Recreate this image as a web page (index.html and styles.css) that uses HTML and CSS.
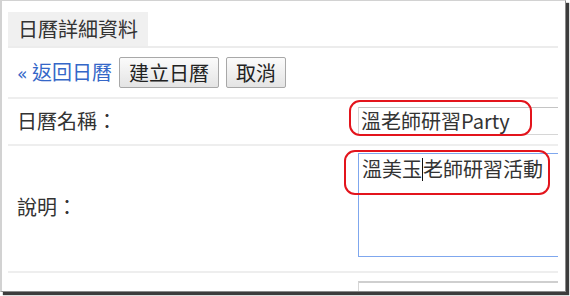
FILE: index.html
```html
<!DOCTYPE html>
<html lang="zh-Hant">
<head>
<meta charset="utf-8">
<title>日曆詳細資料</title>
<link rel="stylesheet" href="styles.css">
</head>
<body>
<div class="frame">
  <div class="content">
    <div class="tabbar"><div class="tab">日曆詳細資料</div></div>
    <div class="toolbar">
      <a class="back" href="#"><span class="raquo">«</span> 返回日曆</a>
      <button class="btn">建立日曆</button>
      <button class="btn">取消</button>
    </div>
    <div class="row row-name">
      <div class="label">日曆名稱：</div>
      <div class="field"><div class="input">溫老師研習Party</div></div>
    </div>
    <div class="row row-desc">
      <div class="label">說明：</div>
      <div class="field"><div class="textarea">溫美玉<span class="caret"></span>老師研習活動</div></div>
    </div>
    <div class="row row-next">
      <div class="label"></div>
      <div class="field"><div class="input input-next"></div></div>
    </div>
  </div>
</div>
<div class="mark mark-name"></div>
<div class="mark mark-desc"></div>
</body>
</html>
```
FILE: styles.css
```css
html, body {
  margin: 0;
  padding: 0;
  background: #ffffff;
}
body {
  position: relative;
  width: 570px;
  height: 296px;
  overflow: hidden;
  font-family: "Noto Sans CJK TC", "Microsoft JhengHei", sans-serif;
  color: #333333;
}
.frame {
  box-sizing: border-box;
  width: 566px;
  height: 292px;
  border-top: 1px solid #d2d2d2;
  border-left: 2px solid #d2d2d2;
  border-right: 1px solid #8a8a8a;
  border-bottom: 1px solid #8a8a8a;
  box-shadow: 3px 3px 1px #3c3c3c;
  background: #ffffff;
  padding: 11px 0 0 6px;
}
.content {
  width: 550px;
  height: 279px;
  overflow: hidden;
}
.tabbar {
  border-bottom: 2px solid #ececec;
  height: 34px;
}
.tab {
  display: inline-block;
  box-sizing: border-box;
  width: 140px;
  height: 34px;
  background: #f0f0f0;
  padding-left: 10px;
  font-size: 20px;
  line-height: 34px;
  color: #333333;
}
.toolbar {
  display: flex;
  align-items: center;
  gap: 7px;
  height: 31px;
  padding: 9px 0 9px 9px;
  border-bottom: 2px solid #eeeeee;
}
.back {
  color: #3567c8;
  text-decoration: none;
  font-size: 20px;
  line-height: 31px;
}
.raquo {
  font-size: 17px;
  font-family: "DejaVu Sans", sans-serif;
}
.btn {
  box-sizing: border-box;
  height: 31px;
  padding: 0 9px;
  border: 1px solid #a8a8a8;
  border-radius: 2px;
  background: linear-gradient(#fbfbfb, #e4e4e4);
  font-family: "Noto Sans CJK TC", "Microsoft JhengHei", sans-serif;
  font-size: 20px;
  line-height: 28px;
  color: #222222;
}
.row {
  display: grid;
  grid-template-columns: 350px 1fr;
  align-items: center;
  border-bottom: 2px solid #eeeeee;
}
.label {
  padding-left: 9px;
  font-size: 20px;
  line-height: 24px;
  color: #333333;
}
.row-name {
  padding: 8px 0 9px;
}
.row-desc {
  padding: 7px 0 14px;
}
.row-desc .label {
  padding-top: 4px;
}
.row-next {
  padding-top: 8px;
  border-bottom: none;
}
.input {
  box-sizing: border-box;
  width: 300px;
  height: 28px;
  border: 1px solid #d6d6d6;
  border-top-color: #c4c4c4;
  padding: 0 0 0 2px;
  font-size: 20px;
  line-height: 26px;
  color: #333333;
  white-space: nowrap;
}
.input-next {
  border-top: 2px solid #cfcfcf;
}
.textarea {
  box-sizing: border-box;
  width: 300px;
  height: 104px;
  border: 1px solid #7fa7ee;
  padding: 2px 0 0 3px;
  font-size: 20px;
  line-height: 26px;
  color: #333333;
  white-space: nowrap;
}
.caret {
  display: inline-block;
  width: 1px;
  height: 23px;
  background: #111111;
  vertical-align: -4px;
}
.mark {
  position: absolute;
  box-sizing: border-box;
  border: 2px solid #e3141c;
  border-radius: 11px;
}
.mark-name {
  left: 349px;
  top: 100px;
  width: 183px;
  height: 36px;
}
.mark-desc {
  left: 344px;
  top: 150px;
  width: 206px;
  height: 45px;
}
```
